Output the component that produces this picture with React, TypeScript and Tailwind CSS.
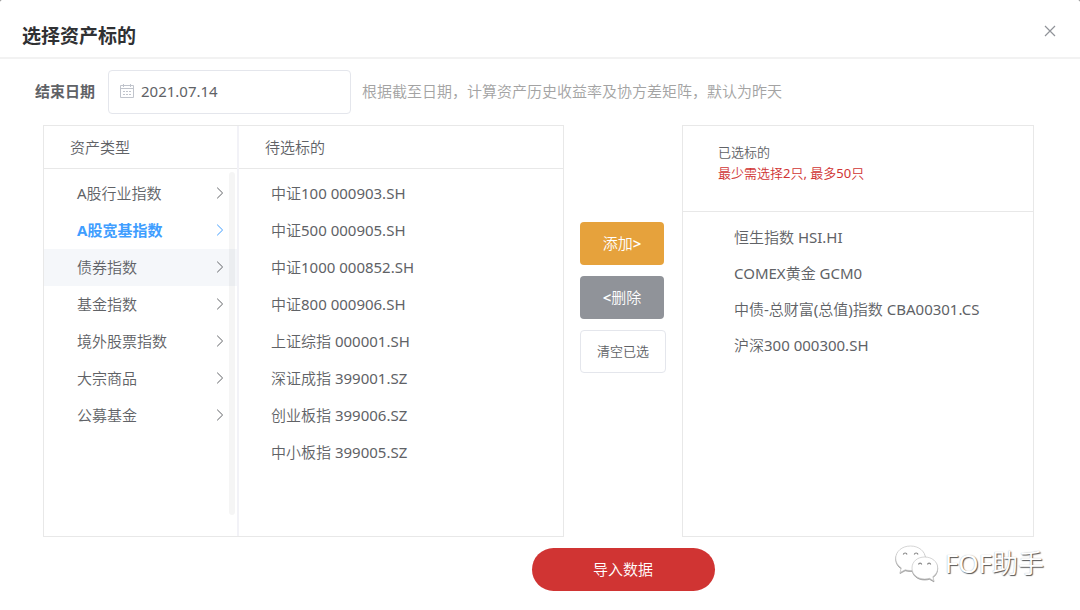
import { useState } from "react";

const assetTypes = [
  "A股行业指数",
  "A股宽基指数",
  "债券指数",
  "基金指数",
  "境外股票指数",
  "大宗商品",
  "公募基金",
];

const candidates = [
  "中证100 000903.SH",
  "中证500 000905.SH",
  "中证1000 000852.SH",
  "中证800 000906.SH",
  "上证综指 000001.SH",
  "深证成指 399001.SZ",
  "创业板指 399006.SZ",
  "中小板指 399005.SZ",
];

const selected = [
  "恒生指数 HSI.HI",
  "COMEX黄金 GCM0",
  "中债-总财富(总值)指数 CBA00301.CS",
  "沪深300 000300.SH",
];

const CalendarIcon = () => (
  <svg
    className="w-[14px] h-[14px] shrink-0"
    viewBox="0 0 14 14"
    fill="none"
    stroke="#c0c4cc"
    aria-hidden="true"
  >
    <path d="M.5 1.5h13v12H.5zM.5 4.5h13M3.5 0v3M10.5 0v3" />
    <path d="M3 7.5h2M6 7.5h2M9 7.5h2M3 10.5h2M6 10.5h2M9 10.5h2" />
  </svg>
);

const ChevronIcon = () => (
  <svg
    className="w-[8px] h-[14px] shrink-0"
    viewBox="0 0 8 14"
    fill="none"
    stroke="currentColor"
    aria-hidden="true"
  >
    <path d="M1.2 1.700 6.600 7 1.200 12.300" />
  </svg>
);

const WeChatIcon = () => (
  <svg
    className="w-[44px] h-[38px] shrink-0 drop-shadow-[0px_1px_0px_#9a9a9a]"
    viewBox="0 0 44 38"
    fill="#fff"
    stroke="#c4c4c4"
    strokeWidth="0.7"
    aria-hidden="true"
  >
    <path d="M15.5 1C7 1 .7 6.4.7 13.3c0 4 2.1 7.300 5.600 9.600L5 27.600l5.200-2.800c1.700.5 3.400.7 5.300.7 8.500 0 14.900-5.400 14.900-12.200S24 1 15.500 1Z" />
    <path d="M29.700 12C22.300 12 17 16.700 17 23s5.300 11 12.700 11c1.700 0 3.300-.2 4.700-.7l4.600 2.600-1.200-4.200c3-2 4.900-5.100 4.900-8.700C42.700 16.700 37.100 12 29.700 12Z" />
    <path
      d="M8.300 9.500c.5-2 3.200-2 3.700 0M19.300 9.500c.5-2 3.200-2 3.700 0M23.500 19.500c.4-1.700 2.800-1.700 3.200 0M32.500 19.500c.4-1.700 2.800-1.700 3.200 0"
      fill="none"
      stroke="#888"
      strokeWidth="1.2"
    />
  </svg>
);

const App = () => {
  const [active, setActive] = useState(1);
  const [date, setDate] = useState("2021.07.14");

  return (
    <div className="bg-[#777]">
      <main className="relative min-h-screen bg-white rounded-t-[2px] text-[15px] leading-[22px] text-[#606266] font-['Noto_Sans','Noto_Sans_CJK_SC_DemiLight','Noto_Sans_CJK_SC',sans-serif]">
        <header className="flex items-center justify-between h-[59px] pl-[22px] pr-6 pt-3 border-b-2 border-[#f2f2f2]">
          <h1 className="pt-[2px] text-[19px] leading-[26px] font-bold text-[#303133] font-['Noto_Sans','Noto_Sans_CJK_SC',sans-serif]">
            选择资产标的
          </h1>
          <button type="button" aria-label="关闭" className="mb-2 text-[#909399]">
            <svg
              className="w-3 h-3"
              viewBox="0 0 12 12"
              fill="none"
              stroke="currentColor"
              strokeWidth="1.2"
            >
              <path d="M1 1l10 10M11 1 1 11" />
            </svg>
          </button>
        </header>

        <div className="flex items-center pl-[35px] pr-6 pt-[11px]">
          <label
            htmlFor="end-date"
            className="shrink-0 pb-[2px] font-bold font-['Noto_Sans','Noto_Sans_CJK_SC',sans-serif]"
          >
            结束日期
          </label>
          <div className="flex items-center gap-[7px] w-[243px] h-[44px] ml-[13px] px-[11px] pb-[2px] border border-[#e4e6ec] rounded">
            <CalendarIcon />
            <input
              id="end-date"
              type="text"
              value={date}
              onChange={(e) => setDate(e.target.value)}
              className="min-w-0 flex-1 outline-none"
            />
          </div>
          <p className="ml-[11px] pb-[2px] text-[#a3a3a3]">
            根据截至日期，计算资产历史收益率及协方差矩阵，默认为昨天
          </p>
        </div>

        <div className="grid grid-cols-[minmax(0,521fr)_86px_minmax(0,352fr)] gap-x-4 gap-y-[11px] pl-[43px] pr-[46px] pt-[11px]">
          <div className="flex h-[412px] border border-[#e8e8e8]">
            <section className="relative w-[195px] shrink-0 border-r-2 border-[#f2f2f7]">
              <h2 className="h-[43px] pl-[26px] pt-[10px] border-b border-[#e8e8e8]">
                资产类型
              </h2>
              <ul className="pt-[6px]">
                {assetTypes.map((name, i) => (
                  <li key={name}>
                    <button
                      type="button"
                      onClick={() => setActive(i)}
                      className={`flex items-center justify-between w-full h-[37px] pl-[33px] pr-[13px] pb-[2px] ${
                        i === active
                          ? "font-bold text-[#409eff] font-['Noto_Sans','Noto_Sans_CJK_SC',sans-serif]"
                          : ""
                      } ${i === 2 ? "bg-[#f5f7fa]" : ""}`}
                    >
                      {name}
                      <ChevronIcon />
                    </button>
                  </li>
                ))}
              </ul>
              <div className="absolute top-[46px] right-[2px] w-[6px] h-[343px] rounded-full bg-black/4" />
            </section>
            <section className="flex-1 min-w-0">
              <h2 className="h-[43px] pl-[26px] pt-[10px] border-b border-[#e8e8e8]">
                待选标的
              </h2>
              <ul className="pt-[6px]">
                {candidates.map((name) => (
                  <li key={name}>
                    <button
                      type="button"
                      className="w-full h-[37px] pl-8 pb-[2px] text-left"
                    >
                      {name}
                    </button>
                  </li>
                ))}
              </ul>
            </section>
          </div>

          <div className="flex flex-col items-start gap-[11px] pt-[97px]">
            <button
              type="button"
              className="w-[84px] h-[43px] pb-[2px] rounded bg-[#e6a23c] text-white"
            >
              添加<span className="font-semibold">&gt;</span>
            </button>
            <button
              type="button"
              className="w-[84px] h-[43px] pb-[2px] rounded bg-[#909399] text-white"
            >
              <span className="font-semibold">&lt;</span>删除
            </button>
            <button
              type="button"
              className="w-[86px] h-[43px] pb-[2px] rounded border border-[#e4e6ec] text-[13px]"
            >
              清空已选
            </button>
          </div>

          <section className="h-[412px] border border-[#e8e8e8]">
            <div className="h-[86px] pl-[35px] pt-4 border-b border-[#e8e8e8] text-[13px] leading-[21px]">
              <h2>已选标的</h2>
              <p className="text-[#d03433]">最少需选择2只, 最多50只</p>
            </div>
            <ul className="pt-[7px]">
              {selected.map((name) => (
                <li key={name}>
                  <button
                    type="button"
                    className="w-full h-[36px] pl-[51px] text-left"
                  >
                    {name}
                  </button>
                </li>
              ))}
            </ul>
          </section>

          <button
            type="button"
            className="col-start-2 justify-self-center w-[183px] h-[43px] pb-[2px] rounded-full bg-[#d03433] text-white"
          >
            导入数据
          </button>
        </div>

        <div className="absolute right-[36px] bottom-[27px] flex items-center gap-[6px]">
          <WeChatIcon />
          <span className="pb-[2px] text-[26px] leading-[36px] text-white [text-shadow:1px_1px_1px_#555,0_0_1px_#aaa]">
            FOF助手
          </span>
        </div>
      </main>
    </div>
  );
};

export default App;
